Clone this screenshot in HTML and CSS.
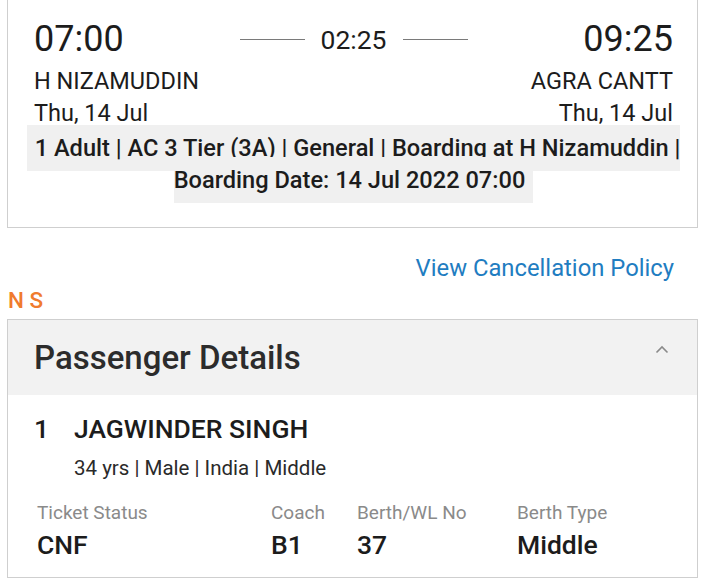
FILE: index.html
```html
<!DOCTYPE html>
<html lang="en">
<head>
    <meta charset="UTF-8">
    <meta name="viewport" content="width=device-width, initial-scale=1.0">
    <title>Booking</title>
    <link rel="stylesheet" href="styles.css">
</head>
<body>
    <div class="journey-card">
        <div class="times">
            <div class="time">07:00</div>
            <div class="duration">
                <span class="dash"></span>
                <span class="duration-text">02:25</span>
                <span class="dash"></span>
            </div>
            <div class="time time-right">09:25</div>
        </div>
        <div class="row">
            <div>H NIZAMUDDIN</div>
            <div>AGRA CANTT</div>
        </div>
        <div class="row">
            <div>Thu, 14 Jul</div>
            <div>Thu, 14 Jul</div>
        </div>
        <div class="info">
            <span class="info-text">1 Adult | AC 3 Tier (3A) | General | Boarding at H Nizamuddin | Boarding Date: 14 Jul 2022 07:00</span>
        </div>
    </div>

    <div class="policy"><a href="#">View Cancellation Policy</a></div>
    <div class="initials">N S</div>

    <div class="passenger-card">
        <div class="passenger-header">
            <div class="passenger-title">Passenger Details</div>
            <svg class="chevron" width="14" height="9" viewBox="0 0 14 9">
                <path d="M1.5 7.5 L7 2 L12.5 7.5" fill="none" stroke="#8a8a8a" stroke-width="1.6"/>
            </svg>
        </div>
        <div class="passenger-body">
            <div class="passenger-name">
                <span class="num">1</span>
                <span>JAGWINDER SINGH</span>
            </div>
            <div class="passenger-sub">34 yrs | Male | India | Middle</div>
            <div class="details">
                <div class="label">Ticket Status</div>
                <div class="label">Coach</div>
                <div class="label">Berth/WL No</div>
                <div class="label">Berth Type</div>
                <div class="value">CNF</div>
                <div class="value">B1</div>
                <div class="value">37</div>
                <div class="value">Middle</div>
            </div>
        </div>
    </div>
</body>
</html>
```

FILE: styles.css
```css
html,
body {
    margin: 0;
    font-family: Roboto, 'Liberation Sans', sans-serif;
    background-color: #FFF;
    color: #1c1c1c;
}

.journey-card {
    margin-left: 7px;
    width: 689px;
    border: 1px solid #cfcfcf;
    border-top: none;
    padding: 18px 0 31px;
}

.times {
    display: grid;
    grid-template-columns: 1fr auto 1fr;
    align-items: center;
    padding: 0 24px 0 26px;
    height: 42px;
}

.time {
    font-size: 36px;
    line-height: 42px;
}

.time-right {
    text-align: right;
}

.duration {
    display: flex;
    align-items: center;
    gap: 16px;
}

.dash {
    width: 65px;
    height: 1px;
    background-color: #7a7a7a;
}

.duration-text {
    font-size: 26.5px;
}

.row {
    display: flex;
    justify-content: space-between;
    padding: 0 24px 0 26px;
    font-size: 23.5px;
    line-height: 32px;
}

.row:nth-child(2) {
    margin-top: 5px;
}

.info {
    text-align: center;
    font-size: 23.6px;
    font-weight: 500;
    line-height: 32px;
    padding: 3px 8px 0 10px;
}

.info-text {
    background-color: #f0f0f0;
    padding: 9px 8px;
}

.policy {
    text-align: right;
    padding: 24px 31px 0 0;
    font-size: 23.8px;
    line-height: 32px;
}

.policy a {
    color: #1f7dc1;
    text-decoration: none;
}

.initials {
    padding-left: 8px;
    color: #f07b2e;
    font-size: 22.5px;
    font-weight: 500;
    line-height: 24px;
    margin-top: 4px;
}

.passenger-card {
    margin: 7px 0 0 7px;
    width: 689px;
    border: 1px solid #cfcfcf;
}

.passenger-header {
    display: flex;
    align-items: center;
    justify-content: space-between;
    background-color: #f2f2f2;
    height: 75px;
    padding: 0 28px 0 26px;
}

.passenger-title {
    font-size: 33px;
    font-weight: 500;
    color: #2c2c2c;
}

.chevron {
    margin-bottom: 16px;
}

.passenger-body {
    padding: 18px 0 16px 26px;
}

.passenger-name {
    display: flex;
    font-size: 26.5px;
    font-weight: 500;
    line-height: 32px;
}

.num {
    width: 40px;
}

.passenger-sub {
    padding-left: 40px;
    font-size: 20.5px;
    line-height: 26px;
    margin-top: 10px;
    color: #2a2a2a;
}

.details {
    display: grid;
    grid-template-columns: 234px 86px 160px 1fr;
    padding-left: 3px;
    margin-top: 19px;
}

.label {
    font-size: 19px;
    line-height: 26px;
    color: #8a8a8a;
}

.value {
    font-size: 26.5px;
    font-weight: 500;
    line-height: 32px;
    margin-top: 3px;
}
```
